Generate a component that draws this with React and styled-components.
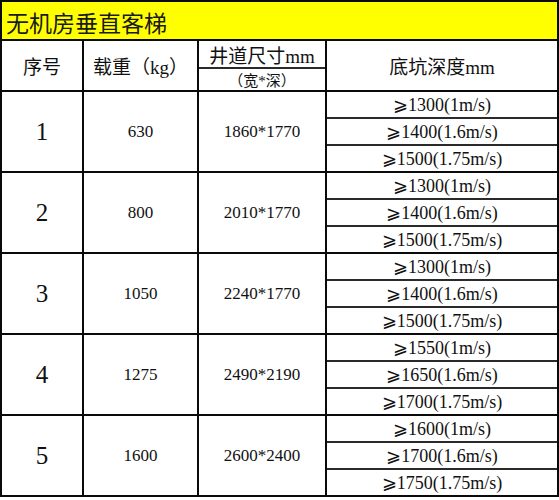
import styled, { createGlobalStyle } from "styled-components"

const GlobalStyle = createGlobalStyle`
  body {
    margin: 0;
    background: #fff;
    font-family: "Liberation Serif", "Noto Sans CJK SC", serif;
    color: #111;
  }
`

const groups = [
  { no: 1, load: "630", shaft: "1860*1770", pits: ["⩾1300(1m/s)", "⩾1400(1.6m/s)", "⩾1500(1.75m/s)"] },
  { no: 2, load: "800", shaft: "2010*1770", pits: ["⩾1300(1m/s)", "⩾1400(1.6m/s)", "⩾1500(1.75m/s)"] },
  { no: 3, load: "1050", shaft: "2240*1770", pits: ["⩾1300(1m/s)", "⩾1400(1.6m/s)", "⩾1500(1.75m/s)"] },
  { no: 4, load: "1275", shaft: "2490*2190", pits: ["⩾1550(1m/s)", "⩾1650(1.6m/s)", "⩾1700(1.75m/s)"] },
  { no: 5, load: "1600", shaft: "2600*2400", pits: ["⩾1600(1m/s)", "⩾1700(1.6m/s)", "⩾1750(1.75m/s)"] },
]

export default function App() {
  return (
    <>
      <GlobalStyle />
      <Sheet>
        <Title>无机房垂直客梯</Title>

        <Cell $size={19}>序号</Cell>
        <Cell $size={19}>载重（kg）</Cell>
        <SplitCell>
          <Part $h={26} $size={19}>井道尺寸mm</Part>
          <Part $h={21} $size={15} $line>（宽*深）</Part>
        </SplitCell>
        <Cell $size={19}>底坑深度mm</Cell>

        {groups.map((g) => (
          <Group key={g.no} g={g} />
        ))}
      </Sheet>
    </>
  )
}

function Group({ g }) {
  return (
    <>
      <Cell $size={25}>{g.no}</Cell>
      <Cell $size={17}>{g.load}</Cell>
      <Cell $size={17}>{g.shaft}</Cell>
      <SplitCell>
        {g.pits.map((p, i) => (
          <Part key={i} $h={25} $size={18} $line={i > 0}>{p}</Part>
        ))}
      </SplitCell>
    </>
  )
}

const Sheet = styled.div`
  display: grid;
  grid-template-columns: 80px 113px 126px 230px;
  grid-template-rows: 37px 49px repeat(5, 79px);
  gap: 2px;
  padding: 2px;
  width: 559px;
  box-sizing: border-box;
  background: #0a0a0a;
`
const Title = styled.div`
  grid-column: 1 / -1;
  background: #ffff00;
  display: flex;
  align-items: center;
  padding: 2px 0 0 4px;
  font-size: 23px;
  color: #1a1a1a;
`
const Cell = styled.div`
  background: #fff;
  display: flex;
  align-items: center;
  justify-content: center;
  font-size: ${(p) => p.$size}px;
  white-space: nowrap;
`
const SplitCell = styled.div`
  background: #fff;
  display: flex;
  flex-direction: column;
`
const Part = styled.div`
  height: ${(p) => p.$h}px;
  display: flex;
  align-items: center;
  justify-content: center;
  font-size: ${(p) => p.$size}px;
  white-space: nowrap;
  border-top: ${(p) => (p.$line ? "2px solid #2a2a2a" : "none")};
`
